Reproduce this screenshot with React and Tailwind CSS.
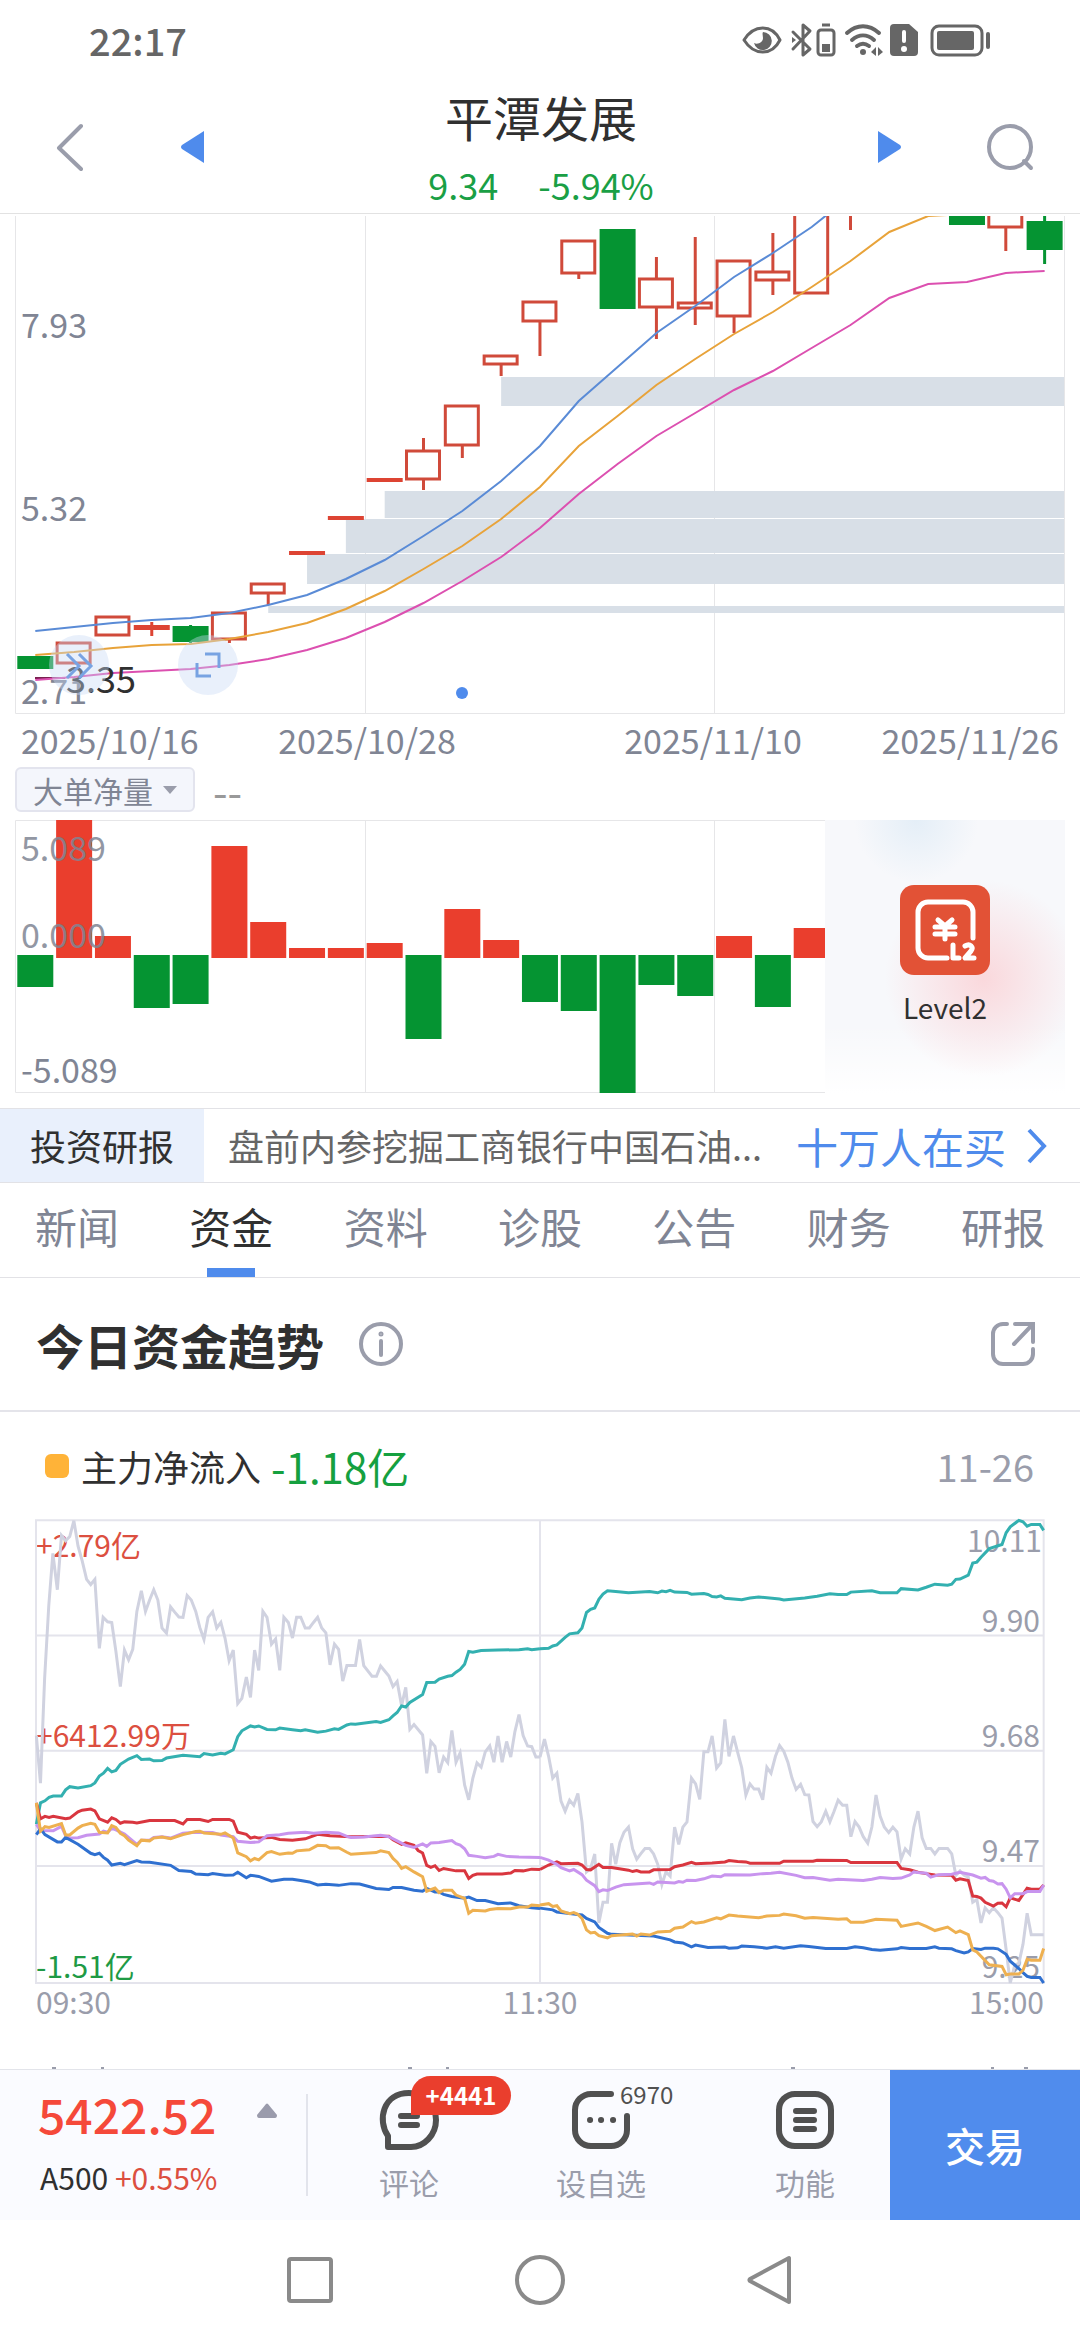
import React, { useState } from 'react';

// Daily candles: open/close edges of the body plus optional wick ends
const candles = [
  { type: 'down', top: 440, bottom: 453 },
  { type: 'up', top: 426, bottom: 448 },
  { type: 'up', top: 400, bottom: 420 },
  { type: 'flat', top: 409, bottom: 414, high: 406, low: 420 },
  { type: 'down', top: 410, bottom: 426, high: 409, low: 427 },
  { type: 'up', top: 396, bottom: 424, low: 427 },
  { type: 'up', top: 367, bottom: 378, low: 389 },
  { type: 'flat', top: 335, bottom: 339 },
  { type: 'flat', top: 300, bottom: 304 },
  { type: 'flat', top: 262, bottom: 266 },
  { type: 'up', top: 234, bottom: 264, high: 222, low: 274 },
  { type: 'up', top: 189, bottom: 230, low: 242 },
  { type: 'up', top: 139, bottom: 149, low: 160 },
  { type: 'up', top: 85, bottom: 106, low: 140 },
  { type: 'up', top: 24, bottom: 58, low: 63 },
  { type: 'down', top: 13, bottom: 93 },
  { type: 'up', top: 62, bottom: 92, high: 41, low: 123 },
  { type: 'up', top: 86, bottom: 93, high: 21, low: 109 },
  { type: 'up', top: 44, bottom: 101, low: 117 },
  { type: 'up', top: 55, bottom: 65, high: 17, low: 79 },
  { type: 'up', top: -60, bottom: 78 },
  { type: 'up', top: -90, bottom: -20, low: 14 },
  null,
  null,
  { type: 'down', top: -30, bottom: 9 },
  { type: 'up', top: -30, bottom: 12, low: 35 },
  { type: 'down', top: 5, bottom: 34, high: -5, low: 48 },
];

const averages = [
  {
    color: '#5a8bd6',
    values: [415, 411, 407, 404, 402, 397, 389, 379, 363, 344, 320, 295, 265, 230, 185, 151, 117, 90, 61, 37, 11, -20],
  },
  {
    color: '#e8a33a',
    values: [439, 436, 432, 429, 428, 423, 416, 407, 393, 375, 353, 330, 303, 271, 230, 200, 169, 143, 118, 96, 71, 45, 16, 0, -2],
  },
  {
    color: '#dc50b0',
    values: [464, 461, 457, 455, 453, 449, 443, 434, 422, 406, 387, 365, 341, 312, 278, 248, 220, 197, 174, 155, 132, 109, 82, 68, 66, 57, 55],
  },
];

// Price gaps that were never filled, drawn to the right edge
const gaps = [
  { from: 12, top: 161, bottom: 190 },
  { from: 9, top: 275, bottom: 302 },
  { from: 8, top: 303, bottom: 337 },
  { from: 7, top: 338, bottom: 368 },
  { from: 6, top: 390, bottom: 397 },
];

// Positive goes up from the zero line, negative goes down
const netOrders = [-32, 138, 22, -53, -49, 112, 36, 10, 10, 15, -84, 49, 18, -47, -56, -138, -30, -41, 22, -52, 30];

const flows = [
  {
    name: 'price',
    color: '#d0d2e0',
    morning: '105,685 117,823 129,520 141,310 153,157 166,262 178,105 190,120 202,108 214,62 226,135 238,178 251,232 263,247 275,232 288,432 299,342 312,355 324,357 336,440 349,543 361,437 373,465 385,435 397,325 410,265 422,325 434,292 446,262 458,292 470,373 483,388 495,312 507,327 519,341 531,342 543,279 555,292 568,325 580,372 592,406 604,342 617,326 629,373 641,357 653,402 665,468 677,437 690,592 702,577 715,515 727,574 739,437 751,496 763,325 775,342 788,420 800,405 812,496 824,342 837,357 849,402 861,342 873,342 886,373 898,373 910,357 922,342 934,373 946,387 958,480 971,420 983,435 995,527 1007,482 1032,482 1044,406 1056,482 1080,513 1093,513 1105,483 1129,512 1141,543 1153,528 1166,598 1178,545 1190,667 1202,653 1227,683 1239,794 1251,702 1263,716 1275,793 1288,747 1300,763 1312,670 1324,762 1336,735 1349,828 1361,871 1373,808 1385,764 1397,776 1409,732 1422,715 1434,762 1446,686 1458,762 1471,702 1483,747 1495,674 1507,624 1519,685 1532,715 1544,717 1556,747 1568,747',
    afternoon: '0,747 13,695 25,745 37,808 49,794 61,875 73,904 86,872 98,887 110,853 122,935 135,1080 147,1070 159,1028 171,1228 183,1168 196,1168 208,997 220,1058 232,995 244,965 257,950 269,1013 281,1043 293,1027 305,1012 318,1012 330,1028 342,1058 354,1117 366,1080 378,1092 391,950 403,1000 415,950 427,935 440,808 452,825 464,870 476,732 488,732 500,686 513,779 525,764 537,638 549,745 562,686 574,733 586,778 598,857 610,825 622,840 635,840 647,871 659,777 671,794 684,745 696,714 708,730 720,762 732,808 744,841 757,826 769,856 781,857 793,934 805,949 817,935 830,904 842,935 854,905 866,872 879,887 891,887 903,978 915,934 927,950 939,978 952,997 964,950 976,857 988,918 1000,950 1013,966 1025,950 1037,964 1049,1043 1061,1013 1074,1028 1086,950 1098,904 1110,981 1122,1012 1135,1012 1147,1028 1159,1012 1184,1012 1196,1028 1208,1090 1220,1077 1232,1090 1244,1095 1257,1168 1269,1160 1281,1228 1293,1184 1305,1198 1317,1184 1330,1198 1342,1214 1354,1305 1366,1402 1379,1350 1391,1345 1403,1290 1415,1200 1427,1262 1463,1262',
  },
  {
    name: 'small',
    color: '#33b0b0',
    morning: '105,942 117,880 130,874 142,864 154,860 178,860 190,842 202,833 226,837 263,830 275,822 288,802 300,794 312,780 324,790 336,786 349,768 373,753 397,743 410,754 434,753 446,758 470,757 483,750 531,742 580,746 592,737 617,741 641,736 653,738 677,726 690,688 702,671 727,657 739,660 751,657 775,667 800,668 812,663 849,668 873,671 886,668 922,675 946,672 971,665 983,667 1007,654 1019,651 1032,652 1092,644 1105,647 1129,639 1141,628 1153,618 1166,599 1178,602 1190,589 1227,566 1239,531 1263,530 1275,521 1300,513 1312,511 1324,501 1336,493 1349,478 1361,441 1373,443 1397,438 1446,437 1507,436 1532,433 1544,436 1568,433',
    afternoon: '0,433 25,432 37,425 49,422 73,400 86,390 110,387 122,373 135,328 147,319 159,315 171,290 183,275 196,265 220,267 257,271 318,267 342,271 354,266 366,268 378,264 391,269 427,270 440,275 476,273 488,276 500,282 513,283 525,280 537,287 586,291 610,286 635,283 696,289 708,292 769,286 805,281 842,274 866,276 891,276 903,269 964,265 988,271 1037,271 1049,259 1098,263 1122,255 1147,246 1184,249 1196,246 1208,232 1220,231 1244,220 1257,185 1269,182 1281,168 1305,143 1342,131 1354,97 1366,80 1391,61 1403,65 1415,78 1427,73 1452,73 1463,90',
  },
  {
    name: 'large',
    color: '#d9363f',
    morning: '105,880 117,926 130,919 142,922 154,919 190,926 202,924 226,906 238,901 263,898 275,903 288,926 312,936 324,923 336,928 349,939 361,935 385,936 397,938 434,931 507,931 531,941 543,928 580,928 604,934 617,928 665,928 677,933 690,965 715,971 727,982 739,979 751,982 788,980 812,986 849,988 886,984 922,971 958,975 1019,978 1129,977 1141,987 1166,1000 1178,996 1202,1003 1214,1018 1227,1025 1239,1061 1251,1067 1263,1062 1275,1076 1288,1070 1324,1077 1349,1077 1361,1099 1373,1090 1385,1086 1458,1086 1483,1083 1495,1076 1519,1077 1544,1072 1568,1073',
    afternoon: '0,1073 25,1060 49,1051 61,1056 110,1055 122,1060 135,1073 147,1074 171,1058 183,1067 208,1067 257,1075 269,1079 281,1076 293,1080 318,1080 330,1074 378,1073 391,1065 415,1060 440,1052 452,1056 500,1054 537,1051 549,1047 574,1050 598,1051 610,1055 696,1055 708,1049 793,1049 805,1046 891,1047 903,1053 1037,1053 1049,1070 1074,1074 1098,1081 1122,1085 1147,1089 1196,1090 1208,1104 1220,1100 1244,1105 1257,1150 1269,1151 1281,1156 1293,1168 1317,1179 1330,1171 1342,1170 1354,1181 1366,1155 1391,1163 1403,1145 1415,1127 1427,1130 1452,1130 1463,1118',
  },
  {
    name: 'super',
    color: '#c894ee',
    morning: '105,942 117,960 154,961 178,948 190,975 202,982 226,981 251,974 288,970 300,962 312,965 324,954 336,958 361,970 397,1000 410,988 434,988 446,980 470,978 495,982 531,968 568,965 617,966 641,973 677,978 690,991 727,995 751,993 775,975 812,972 837,968 886,965 910,968 946,965 983,967 1007,977 1019,980 1056,979 1105,974 1129,978 1153,990 1178,1003 1202,1009 1227,999 1239,1006 1251,996 1275,995 1312,989 1324,998 1336,1002 1349,1013 1361,1032 1385,1035 1409,1039 1434,1035 1446,1029 1471,1035 1507,1037 1568,1038',
    afternoon: '0,1038 25,1046 49,1058 61,1068 86,1077 98,1073 122,1088 135,1104 159,1120 171,1137 183,1132 196,1134 220,1124 244,1117 318,1112 330,1116 342,1109 391,1112 403,1108 415,1110 427,1104 452,1105 476,1100 500,1092 525,1094 537,1088 610,1089 647,1085 671,1084 696,1081 744,1090 769,1097 793,1096 842,1104 866,1101 939,1105 964,1101 988,1096 1025,1099 1049,1098 1074,1089 1086,1080 1098,1082 1122,1084 1135,1095 1159,1088 1196,1087 1220,1081 1257,1089 1281,1098 1293,1096 1305,1105 1317,1107 1330,1115 1342,1114 1354,1130 1366,1155 1379,1143 1403,1143 1415,1137 1452,1137 1463,1118',
  },
  {
    name: 'middle',
    color: '#2f70d0',
    morning: '105,972 117,955 130,972 166,993 178,993 190,980 226,1000 263,1026 275,1030 288,1026 300,1038 312,1046 324,1060 349,1055 361,1059 397,1047 410,1051 434,1052 495,1061 519,1076 555,1079 568,1086 604,1088 617,1085 653,1090 677,1089 690,1081 715,1097 727,1090 751,1093 788,1107 824,1101 849,1101 873,1105 898,1109 922,1118 946,1116 983,1119 1019,1114 1044,1115 1092,1128 1129,1131 1141,1125 1166,1125 1202,1133 1227,1136 1239,1128 1263,1138 1275,1138 1288,1145 1312,1151 1349,1156 1361,1153 1385,1163 1409,1163 1446,1172 1483,1170 1507,1178 1544,1184 1568,1186',
    afternoon: '0,1185 37,1190 49,1196 98,1202 122,1205 135,1215 159,1225 171,1241 196,1258 208,1261 330,1266 378,1277 391,1283 415,1286 440,1297 452,1292 488,1299 537,1298 549,1301 574,1300 586,1295 622,1297 659,1301 684,1297 708,1301 757,1294 781,1296 830,1302 891,1302 915,1297 939,1300 964,1305 988,1307 1037,1303 1049,1299 1074,1302 1122,1302 1147,1297 1159,1301 1196,1303 1208,1308 1232,1315 1244,1312 1257,1302 1281,1305 1293,1301 1317,1301 1330,1303 1354,1319 1366,1339 1391,1360 1403,1372 1415,1383 1427,1386 1452,1386 1463,1402',
  },
  {
    name: 'main',
    color: '#eeb050',
    morning: '105,880 117,962 130,949 142,951 178,940 190,973 202,973 226,953 238,946 263,939 275,942 288,965 312,967 324,946 336,951 349,968 361,975 373,988 397,1004 410,988 434,990 446,982 470,979 495,984 531,972 568,963 580,962 592,967 641,971 653,967 677,982 690,1025 715,1036 727,1048 739,1041 751,1045 775,1024 788,1021 812,1029 837,1025 849,1026 861,1019 898,1016 922,1003 946,1004 958,1011 983,1010 1007,1023 1019,1029 1092,1024 1105,1019 1129,1024 1141,1041 1153,1052 1166,1070 1178,1065 1202,1080 1227,1094 1239,1136 1263,1127 1275,1140 1288,1133 1312,1133 1324,1147 1349,1157 1361,1200 1373,1191 1409,1193 1422,1189 1446,1186 1483,1187 1507,1182 1532,1182 1544,1176 1568,1178',
    afternoon: '0,1176 25,1172 37,1180 49,1178 61,1193 86,1201 98,1198 110,1203 122,1215 135,1248 147,1257 159,1255 171,1265 196,1271 208,1265 269,1260 281,1266 293,1260 318,1263 342,1254 378,1252 391,1243 415,1240 440,1224 452,1229 476,1225 513,1213 525,1216 549,1205 574,1208 635,1213 659,1208 696,1206 708,1202 744,1207 769,1214 793,1212 866,1217 891,1216 903,1226 939,1226 976,1217 1037,1220 1049,1238 1098,1228 1122,1238 1147,1250 1184,1240 1208,1256 1220,1251 1244,1262 1257,1306 1269,1312 1305,1349 1342,1354 1354,1378 1366,1376 1391,1376 1403,1365 1415,1333 1427,1336 1452,1336 1463,1302',
  },
];

const tabs = ['新闻', '资金', '资料', '诊股', '公告', '财务', '研报'];

const candleX = (i) => 20.3 + i * 38.82;

function StatusBar() {
  return (
    <div className="flex h-20 items-center justify-between pr-[88px] pl-[89px] text-[#666]">
      <span className="text-[38px] leading-none font-medium">22:17</span>
      <svg className="h-10 w-[250px]" viewBox="0 0 250 40" fill="none" stroke="#666" strokeWidth="3">
        {/* eye */}
        <path d="M2 20C12 4 30 4 38 20C30 36 12 36 2 20Z" strokeLinejoin="round" />
        <path d="M21 12a9 9 0 1 1-9 11c4 2 9-1 9-5 0-2-1-4 0-6Z" fill="#666" stroke="none" />
        {/* bluetooth */}
        <path d="M51 12l17 17-7 6V5l7 6-17 18" strokeLinejoin="round" strokeLinecap="round" />
        <path d="M50 17l4 3-4 3Z" fill="#666" stroke="none" />
        <path d="M80 5h8" />
        <rect x="76" y="10" width="16" height="25" rx="3" />
        <path d="M80 24h8v8h-8z" fill="#666" stroke="none" />
        {/* wifi */}
        <g strokeWidth="4" strokeLinecap="round">
          <path d="M105 13c10-9 22-9 32 0" />
          <path d="M110 20c7-6 15-6 22 0" />
          <path d="M115 26c4-3 8-3 12 0" />
        </g>
        <circle cx="121" cy="32" r="3" fill="#666" stroke="none" />
        <path d="M134 27v9l-5-4ZM136 27v9l5-4Z" fill="#666" stroke="none" />
        {/* sim alert */}
        <path d="M152 4h15l9 8v20a4 4 0 0 1-4 4h-20a4 4 0 0 1-4-4V8a4 4 0 0 1 4-4Z" fill="#666" stroke="none" />
        <path d="M162 12v9" stroke="#fff" strokeWidth="4" strokeLinecap="round" />
        <circle cx="162" cy="29" r="3" fill="#fff" stroke="none" />
        {/* battery */}
        <rect x="190" y="6" width="50" height="29" rx="7" strokeWidth="3" />
        <rect x="195" y="11" width="37" height="19" rx="2" fill="#666" stroke="none" />
        <path d="M246 14v13" strokeWidth="4" strokeLinecap="round" />
      </svg>
    </div>
  );
}

function StockHeader() {
  return (
    <header className="flex h-[134px] items-center justify-between border-b border-[#e2e2e2] px-[46px]">
      <div className="flex items-center gap-24">
        <button type="button" aria-label="返回">
          <svg className="h-12 w-[38px]" viewBox="0 0 38 48" fill="none" stroke="#9a9dab" strokeWidth="4">
            <path d="M35 3L13 25l22 21" strokeLinecap="round" strokeLinejoin="round" />
          </svg>
        </button>
        <button type="button" aria-label="上一只">
          <svg className="h-8 w-6" viewBox="0 0 24 32" fill="#4f8bec">
            <path d="M24 0v32L2 18q-2-2 0-4Z" />
          </svg>
        </button>
      </div>
      <div className="flex flex-col items-center gap-1 pt-0.5">
        <h1 className="text-[48px] leading-[68px] text-[#303030]">平潭发展</h1>
        <p className="flex gap-10 text-[36px] leading-[60px] text-[#1a9f45]">
          <span>9.34</span>
          <span>-5.94%</span>
        </p>
      </div>
      <div className="flex items-center gap-[84px]">
        <button type="button" aria-label="下一只">
          <svg className="h-8 w-6" viewBox="0 0 24 32" fill="#4f8bec">
            <path d="M0 0v32l22-14q2-2 0-4Z" />
          </svg>
        </button>
        <button type="button" aria-label="搜索">
          <svg className="size-12" viewBox="0 0 48 48" fill="none" stroke="#9a9dab" strokeWidth="4">
            <circle cx="24" cy="24" r="21" />
            <path d="M38 38l7 7" strokeLinecap="round" />
          </svg>
        </button>
      </div>
    </header>
  );
}

function Candle({ candle, x }) {
  const { type, top, bottom, high, low } = candle;
  const color = type === 'down' ? '#059432' : type === 'flat' ? '#dd4433' : '#d04a3a';
  return (
    <g stroke={color} strokeWidth="3">
      {high !== undefined && <path d={`M${x} ${high}V${top}`} />}
      {low !== undefined && <path d={`M${x} ${bottom}V${low}`} />}
      {type === 'up' ? (
        <rect x={x - 17} y={top + 1} width="33" height={bottom - top - 2} fill="#fff" />
      ) : (
        <rect x={x - 18} y={top} width="36" height={bottom - top} fill={color} stroke="none" />
      )}
    </g>
  );
}

function CandleChart() {
  return (
    <section className="px-[15px] pt-0.5 text-[34px] leading-10 text-[#808594]">
      <div className="relative">
        <svg className="block h-auto w-full" viewBox="0 0 1050 498" fill="none">
          <path d="M350.5 0V497M699.5 0V497" stroke="#e6e6e8" />
          <path d="M.5 0V497.5H1049.5V0" stroke="#e6e6e8" />
          {gaps.map((gap) => (
            <rect
              key={gap.from}
              x={candleX(gap.from)}
              y={gap.top}
              width={1049 - candleX(gap.from)}
              height={gap.bottom - gap.top}
              fill="#d8dfe7"
            />
          ))}
          {candles.map((candle, i) => candle && <Candle key={i} candle={candle} x={candleX(i)} />)}
          <path d="M20 462h30" stroke="#7a2050" strokeWidth="2" />
          {averages.map((line) => (
            <polyline
              key={line.color}
              points={line.values.map((y, i) => `${candleX(i)},${y}`).join(' ')}
              stroke={line.color}
              strokeWidth="2"
            />
          ))}
          <circle cx="447" cy="477" r="6" fill="#4f8bec" />
        </svg>
        <span className="absolute top-[88px] left-1.5">7.93</span>
        <span className="absolute top-[271px] left-1.5">5.32</span>
        <span className="absolute top-[454px] left-1.5">2.71</span>
        <span className="absolute top-[441px] left-[51px] text-[36px] text-[#303030]">3.35</span>
        <button type="button" aria-label="展开工具" className="absolute top-[419px] left-[34px] size-[60px] rounded-full bg-[#c9d9f6]/40">
          <svg viewBox="0 0 60 60" fill="none" stroke="#78a3e2" strokeWidth="3">
            <path d="M18 19l12 12-12 12M30 19l12 12-12 12" />
          </svg>
        </button>
        <button type="button" aria-label="全屏" className="absolute top-[419px] left-[163px] size-[60px] rounded-full bg-[#c9d9f6]/40">
          <svg viewBox="0 0 60 60" fill="none" stroke="#78a3e2" strokeWidth="3">
            <path d="M27 19h14v14M19 28v13h14" />
          </svg>
        </button>
      </div>
      <div className="grid h-[53px] grid-cols-6 items-center px-1.5 pb-0.5 whitespace-nowrap">
        <span>2025/10/16</span>
        <span className="col-span-2 text-center">2025/10/28</span>
        <span className="col-span-2 text-center">2025/11/10</span>
        <span className="flex justify-end">2025/11/26</span>
      </div>
    </section>
  );
}

function NetOrderChart() {
  return (
    <section className="px-[15px] text-[34px] leading-10 text-[#808594]">
      <div className="flex items-center gap-[18px]">
        <div className="relative">
          <select
            aria-label="指标"
            className="block h-[45px] w-[180px] appearance-none rounded-md border-2 border-[#e3e4ee] bg-[#f4f6fc] pl-4 text-[30px] leading-10 text-[#808594]"
          >
            <option>大单净量</option>
          </select>
          <svg className="pointer-events-none absolute top-[19px] right-[18px] h-2 w-[14px]" viewBox="0 0 14 8" fill="#9a9dab">
            <path d="M0 0h14L7 8Z" />
          </svg>
        </div>
        <span className="text-[42px] text-[#999]">--</span>
      </div>
      <div className="relative mt-2">
        <svg className="block h-auto w-full" viewBox="0 0 1050 273" fill="none">
          <path d="M.5 .5H1049.5V272.5H.5ZM350.5 0V273M699.5 0V273" stroke="#e6e6e8" />
          {netOrders.map((value, i) => (
            <rect
              key={i}
              x={candleX(i) - 18}
              y={value > 0 ? 138 - value : 135}
              width="36"
              height={Math.abs(value)}
              fill={value > 0 ? '#ea3e2d' : '#059432'}
            />
          ))}
        </svg>
        <span className="absolute top-[7px] left-1.5 opacity-85">5.089</span>
        <span className="absolute top-[94px] left-1.5 opacity-85">0.000</span>
        <span className="absolute top-[229px] left-1.5">-5.089</span>
        <a
          href="#level2"
          className="absolute inset-y-0 right-0 flex w-[240px] flex-col items-center bg-[#f7f8fb] bg-[radial-gradient(circle_at_38%_0%,#e4eef7_0,transparent_20%),radial-gradient(circle_at_66%_58%,#fad8dc_0%,transparent_44%),linear-gradient(to_bottom,transparent_75%,#fff)] pt-[65px]"
        >
          <svg className="size-[90px]" viewBox="0 0 90 90" fill="none" stroke="#fff" strokeLinecap="round">
            <rect width="90" height="90" rx="14" fill="#e25236" stroke="none" />
            <path d="M73 53V27a10 10 0 0 0-10-10H28a10 10 0 0 0-10 10v36a10 10 0 0 0 10 10h19" strokeWidth="5" />
            <path d="M38 35l7 6 7-6M35 42h20M35 49h20M45 42v12" strokeWidth="5" />
            <path d="M53 60v13h6M65 61c5-3 9 1 6 5l-6 7h9" strokeWidth="5" strokeLinejoin="round" />
          </svg>
          <span className="mt-3 text-[28px] text-[#303030]">Level2</span>
        </a>
      </div>
    </section>
  );
}

function ReportBanner() {
  return (
    <a href="#report" className="mt-[15px] flex h-[75px] items-stretch border-y border-[#e2e2e6] text-[36px] leading-[72px] whitespace-nowrap">
      <span className="w-[204px] bg-[#e9f0fc] text-center text-[#303030]">投资研报</span>
      <span className="flex-1 pl-6 text-[#666]">盘前内参挖掘工商银行中国石油...</span>
      <span className="flex items-center gap-5 pr-8 text-[42px] text-[#4f8bec]">
        十万人在买
        <svg className="h-9 w-[22px]" viewBox="0 0 22 36" fill="none" stroke="#4f8bec" strokeWidth="4">
          <path d="M3 2l15 16L3 34" />
        </svg>
      </span>
    </a>
  );
}

function DetailTabs() {
  const [active, setActive] = useState('资金');

  return (
    <nav className="flex h-[95px] justify-between border-b border-[#e2e2e6] px-[35px]">
      {tabs.map((tab) => (
        <button
          key={tab}
          type="button"
          onClick={() => setActive(tab)}
          className={`relative pb-2 text-[42px] leading-none ${active === tab ? 'text-[#303030]' : 'text-[#808594]'}`}
        >
          {tab}
          {active === tab && <span className="absolute bottom-0 left-1/2 h-[9px] w-12 -translate-x-1/2 bg-[#4f8bec]" />}
        </button>
      ))}
    </nav>
  );
}

function FundTrend() {
  return (
    <section>
      <div className="flex h-[134px] items-center justify-between border-b-2 border-[#e4e4ea] px-9">
        <div className="flex items-center gap-[34px]">
          <h2 className="text-[48px] leading-none font-bold text-[#303030]">今日资金趋势</h2>
          <button type="button" aria-label="说明">
            <svg className="size-[46px]" viewBox="0 0 46 46" fill="none" stroke="#9a9dab" strokeWidth="4" strokeLinecap="round">
              <circle cx="23" cy="23" r="20" />
              <path d="M23 20v14" />
              <circle cx="23" cy="13" r="1" strokeWidth="3" />
            </svg>
          </button>
        </div>
        <button type="button" aria-label="分享" className="mr-2">
          <svg className="size-[46px]" viewBox="0 0 46 46" fill="none" stroke="#9a9dab" strokeWidth="4" strokeLinecap="round">
            <path d="M17 3h-4A10 10 0 0 0 3 13v20a10 10 0 0 0 10 10h20a10 10 0 0 0 10-10v-5" />
            <path d="M25 3h18v18M43 3L24 23" />
          </svg>
        </button>
      </div>

      <div className="flex h-[108px] items-center pr-[46px] pl-[45px]">
        <span className="size-6 rounded-md bg-[#ffb338]" />
        <span className="ml-3 text-[36px] leading-none text-[#303030]">主力净流入</span>
        <span className="ml-2.5 text-[42px] leading-none text-[#15a03f]">-1.18亿</span>
        <span className="ml-auto text-[38px] leading-none text-[#9a9dab]">11-26</span>
      </div>

      <div className="px-9 text-[30px] leading-9 text-[#9a9dab]">
        <div className="relative h-[463px]">
          <span className="absolute top-[6px] left-0 text-[#dc4f40]">+2.79亿</span>
          <span className="absolute top-[196px] left-0 text-[#dc4f40]">+6412.99万</span>
          <span className="absolute bottom-0 left-0 text-[#1f9a45]">-1.51亿</span>
          <span className="absolute top-[1px] right-0.5">10.11</span>
          <span className="absolute top-[81px] right-1">9.90</span>
          <span className="absolute top-[196px] right-1">9.68</span>
          <span className="absolute top-[311px] right-1">9.47</span>
          <span className="absolute right-1 bottom-0">9.25</span>
          <svg className="absolute inset-0 h-full w-full overflow-visible" viewBox="104 60 2928 1342" preserveAspectRatio="none" fill="none">
            <path
              d="M104 61H3031V1402H104ZM1568 61V1402M104 395H3031M104 729H3031M104 1063H3031"
              stroke="#e4e4ec"
              strokeWidth="2"
              vectorEffect="non-scaling-stroke"
            />
            {flows.map((flow) => (
              <g key={flow.name} stroke={flow.color} strokeWidth="3">
                <polyline points={flow.morning} vectorEffect="non-scaling-stroke" />
                <polyline points={flow.afternoon} transform="translate(1568 0)" vectorEffect="non-scaling-stroke" />
              </g>
            ))}
          </svg>
        </div>
        <div className="flex justify-between">
          <span>09:30</span>
          <span>11:30</span>
          <span>15:00</span>
        </div>
      </div>
    </section>
  );
}

function BottomBar() {
  return (
    <div className="flex h-[151px] border-t border-[#e2e4ea] bg-[#fafbff]">
      <button type="button" className="flex w-[308px] items-center">
        <span className="flex flex-1 flex-col items-start pb-1 pl-[38px]">
          <span className="flex w-full items-start justify-between text-[48px] leading-[48px] font-medium text-[#f5493a]">
            5422.52
            <svg className="mt-3.5 mr-[29px] h-[15px] w-5" viewBox="0 0 20 15" fill="#9a9bac">
              <path d="M9 1q1-1 2 0l9 11q0 3-2 3H2q-2 0-2-3Z" />
            </svg>
          </span>
          <span className="mt-5 pl-0.5 text-[30px] leading-10 text-[#303030]">
            A500 <span className="text-[#dc4f40]">+0.55%</span>
          </span>
        </span>
        <span className="h-[102px] w-0.5 bg-[#e2e4ec]" />
      </button>

      <div className="flex flex-1 justify-between pt-5 pr-[55px] pl-[71px] text-[30px] leading-9 text-[#9a9dab]">
        <button type="button" className="relative flex flex-col items-center gap-[14px]">
          <svg className="size-[60px]" viewBox="0 0 60 60" fill="none" stroke="#505050" strokeWidth="6">
            <path d="M9 57V46C-2 30 4 3 30 3c15 0 27 12 27 27S45 57 32 57Z" strokeLinejoin="round" />
            <path d="M22 26h16M22 35h16" strokeLinecap="round" />
          </svg>
          评论
          <span className="absolute top-[-14px] left-8 h-[39px] w-[100px] rounded-[20px] rounded-bl-none bg-[#ea3e2d] text-center text-[24px] leading-[38px] font-bold text-white">
            +4441
          </span>
        </button>
        <button type="button" className="relative flex flex-col items-center gap-[14px] pr-3">
          <svg className="size-[60px]" viewBox="0 0 60 60" fill="none" stroke="#505050" strokeWidth="6" strokeLinecap="round">
            <path d="M40 4H20A16 16 0 0 0 4 20v20a16 16 0 0 0 16 16h20a16 16 0 0 0 16-16V26" />
            <path d="M19 30h.1M30 30h.1M42 30h.1" />
          </svg>
          设自选
          <span className="absolute top-[-12px] left-16 text-[24px] leading-8 text-[#505050]">6970</span>
        </button>
        <button type="button" className="flex flex-col items-center gap-[14px]">
          <svg className="size-[60px]" viewBox="0 0 60 60" fill="none" stroke="#505050" strokeWidth="6" strokeLinecap="round">
            <rect x="4" y="4" width="52" height="52" rx="16" />
            <path d="M21 21h18M21 30h18M21 39h18" />
          </svg>
          功能
        </button>
      </div>

      <button type="button" className="w-[190px] bg-[#508ced] text-[40px] font-medium text-white">
        交易
      </button>
    </div>
  );
}

function SystemNav() {
  return (
    <div className="flex h-[120px] items-center justify-center gap-[180px]">
      <button type="button" aria-label="最近任务">
        <svg className="size-[50px]" viewBox="0 0 50 50" fill="none" stroke="#8a8a8a" strokeWidth="4">
          <rect x="4" y="4" width="42" height="42" rx="2" />
        </svg>
      </button>
      <button type="button" aria-label="主屏幕">
        <svg className="size-[50px]" viewBox="0 0 50 50" fill="none" stroke="#8a8a8a" strokeWidth="4">
          <circle cx="25" cy="25" r="23" />
        </svg>
      </button>
      <button type="button" aria-label="返回">
        <svg className="size-[50px]" viewBox="0 0 50 50" fill="none" stroke="#8a8a8a" strokeWidth="4" strokeLinejoin="round">
          <path d="M44 3v44L5 26q-1-1 0-2L44 3Z" />
        </svg>
      </button>
    </div>
  );
}

export default function App() {
  return (
    <div className="flex min-h-screen flex-col bg-white font-['Noto_Sans_CJK_SC',sans-serif]">
      <StatusBar />
      <StockHeader />
      <main className="flex flex-1 flex-col">
        <CandleChart />
        <NetOrderChart />
        <ReportBanner />
        <DetailTabs />
        <FundTrend />
        {/* tips of the next row, peeking out above the bottom bar */}
        <svg className="mt-auto h-0.5 w-full" viewBox="0 0 1080 2" preserveAspectRatio="none" stroke="#9a9dab" strokeWidth="2">
          <path d="M52 1h4M101 1h3M408 1h4M446 1h3M791 1h4M991 1h3M1024 1h4" />
        </svg>
      </main>
      <BottomBar />
      <SystemNav />
    </div>
  );
}
